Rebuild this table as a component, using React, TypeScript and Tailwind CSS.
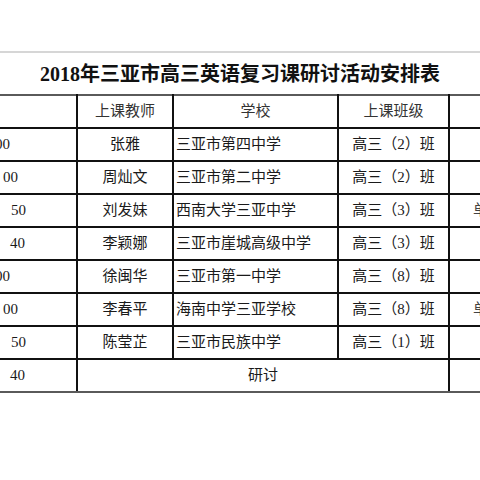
const rows = [
  { time: "00", timeCls: "-ml-[5px]", teacher: "张雅", school: "三亚市第四中学", grade: "高三（2）班", note: "" },
  { time: "00", timeCls: "ml-[3px]", teacher: "周灿文", school: "三亚市第二中学", grade: "高三（2）班", note: "" },
  { time: "50", timeCls: "ml-[11px]", teacher: "刘发妹", school: "西南大学三亚中学", grade: "高三（3）班", note: "单" },
  { time: "40", timeCls: "ml-[10px]", teacher: "李颖娜", school: "三亚市崖城高级中学", grade: "高三（3）班", note: "" },
  { time: "00", timeCls: "-ml-[5px]", teacher: "徐闽华", school: "三亚市第一中学", grade: "高三（8）班", note: "" },
  { time: "00", timeCls: "ml-[3px]", teacher: "李春平", school: "海南中学三亚学校", grade: "高三（8）班", note: "单" },
  { time: "50", timeCls: "ml-[11px]", teacher: "陈莹芷", school: "三亚市民族中学", grade: "高三（1）班", note: "" },
];

const font = "font-['Liberation_Serif','Noto_Sans_CJK_SC',serif]";

const App = () => {
  return (
    <div className={`w-[480px] h-[480px] bg-white overflow-hidden text-[#1a1a1a] ${font}`}>
      <div className="h-[51px]" />
      <div className="h-[43px] border-t-2 border-[#d6d6d6] flex items-center justify-center">
        <h1 className="text-[20px] font-bold leading-none whitespace-nowrap text-[#111]">
          2018年三亚市高三英语复习课研讨活动安排表
        </h1>
      </div>

      <table className="table-fixed border-collapse w-[480px] text-[15px] leading-none">
        <colgroup>
          <col className="w-[77px]" />
          <col className="w-[96px]" />
          <col className="w-[165px]" />
          <col className="w-[111px]" />
          <col className="w-[31px]" />
        </colgroup>
        <tbody>
          <tr className="h-[33px]">
            <td className="border-t-2 border-b-2 border-r-2 border-t-[#5a5a5a] border-[#111]" />
            <td className="border-2 border-t-[#5a5a5a] border-[#111] text-center text-[#333]">上课教师</td>
            <td className="border-2 border-t-[#5a5a5a] border-[#111] text-center text-[#333]">学校</td>
            <td className="border-2 border-t-[#5a5a5a] border-[#111] text-center text-[#333]">上课班级</td>
            <td className="border-t-2 border-b-2 border-l-2 border-t-[#5a5a5a] border-[#111]" />
          </tr>
          {rows.map((r, i) => (
            <tr key={i} className="h-[33px]">
              <td className="border-y-2 border-r-2 border-[#111] overflow-hidden whitespace-nowrap">
                <span className={`inline-block ${r.timeCls}`}>{r.time}</span>
              </td>
              <td className="border-2 border-[#111] text-center">{r.teacher}</td>
              <td className="border-2 border-[#111] pl-[2px] whitespace-nowrap">{r.school}</td>
              <td className="border-2 border-[#111] text-center whitespace-nowrap">{r.grade}</td>
              <td className="border-y-2 border-l-2 border-[#111] overflow-hidden whitespace-nowrap">
                <span className="inline-block ml-[23px] text-[#444]">{r.note}</span>
              </td>
            </tr>
          ))}
          <tr className="h-[33px]">
            <td className="border-t-2 border-b-2 border-r-2 border-t-[#111] border-b-[#5a5a5a] border-r-[#111] overflow-hidden whitespace-nowrap">
              <span className="inline-block ml-[10px]">40</span>
            </td>
            <td colSpan={3} className="border-2 border-[#111] border-b-[#5a5a5a] text-center">研讨</td>
            <td className="border-t-2 border-b-2 border-l-2 border-t-[#111] border-b-[#5a5a5a] border-l-[#111]" />
          </tr>
        </tbody>
      </table>
    </div>
  );
};

export default App;
